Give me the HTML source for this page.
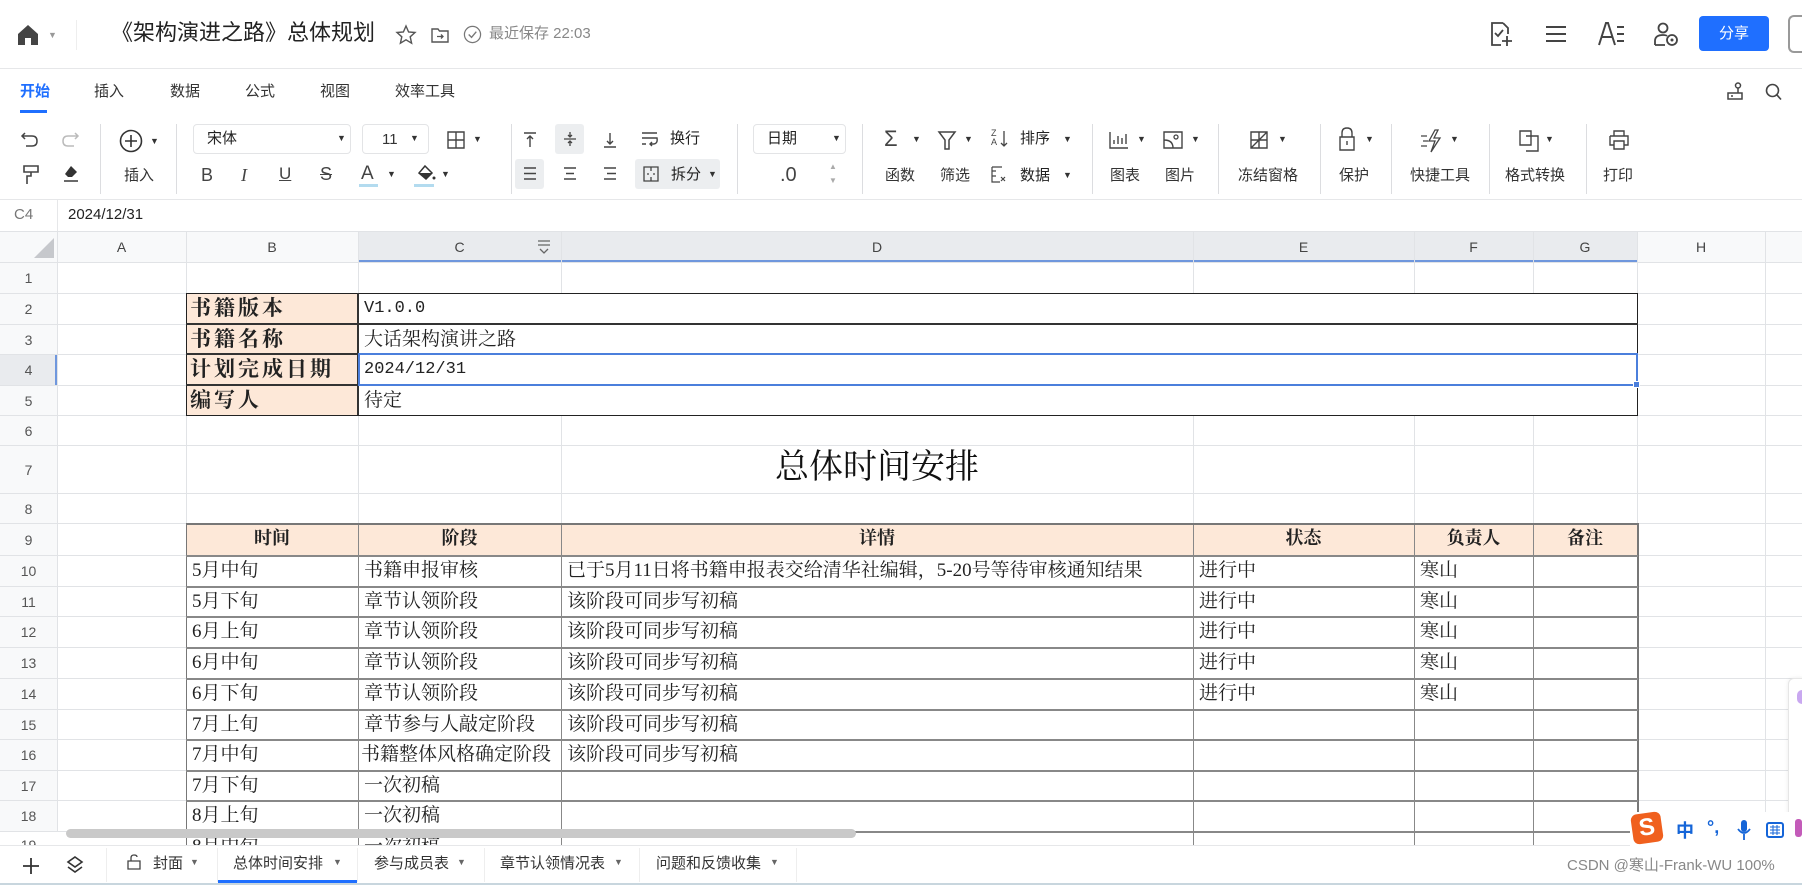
<!DOCTYPE html>
<html><head><meta charset="utf-8">
<style>
*{margin:0;padding:0;box-sizing:border-box}
body{width:1802px;height:885px;overflow:hidden;background:#fff;font-family:"Liberation Sans","Noto Sans CJK SC",sans-serif;color:#333;position:relative}
.a{position:absolute}
.t{position:absolute;white-space:nowrap;line-height:1}
.ui{font-size:15px;color:#333}
.sep{position:absolute;width:1px;background:#dcdde0;top:124px;height:70px}
.dd{position:absolute;border:1px solid #e3e4e6;border-radius:4px;background:#fff}
.tri{display:inline-block;font-size:9px;color:#333}
.vl{position:absolute;width:1px;background:#e1e3e6;top:232px;height:600px}
.hl{position:absolute;height:1px;background:#e1e3e6;left:0;width:1802px}
.rn{position:absolute;left:0;width:57px;text-align:center;font-size:14px;color:#555;line-height:1}
.ch{position:absolute;top:232px;height:30px;line-height:30px;text-align:center;font-size:14px;color:#444}
.cell{position:absolute;font-family:"Liberation Serif","Noto Serif CJK SC",serif;font-size:19px;color:#222;white-space:nowrap;line-height:31px;padding-left:6px;overflow:hidden}
.lab{background:#fde8d8;font-weight:bold;font-size:21px;letter-spacing:3px;padding-left:4px}
.hd{background:#fde8d8;font-weight:bold;text-align:center;padding-left:0;font-size:18px}
svg{position:absolute;overflow:visible}
</style></head><body>

<!-- top bar -->
<svg style="left:17px;top:24px" width="22" height="22" viewBox="0 0 22 22"><path d="M11 1 L21 10 V21 H14 V14 H8 V21 H1 V10 Z" fill="#444"/></svg>
<div class="t" style="left:48px;top:31px;font-size:9px;color:#999">▼</div>
<div class="a" style="left:76px;top:20px;width:1px;height:30px;background:#eee"></div>
<div class="t" style="left:111px;top:22px;font-size:22px;color:#222">《架构演进之路》总体规划</div>
<svg style="left:395px;top:24px" width="22" height="22" viewBox="0 0 22 22"><path d="M11 2 L13.6 8 L20 8.5 L15.2 12.8 L16.6 19.2 L11 15.8 L5.4 19.2 L6.8 12.8 L2 8.5 L8.4 8 Z" fill="none" stroke="#555" stroke-width="1.4"/></svg>
<svg style="left:430px;top:25px" width="20" height="20" viewBox="0 0 20 20"><path d="M2 4 H8 L9.5 6 H18 V17 H2 Z" fill="none" stroke="#555" stroke-width="1.4"/><path d="M7 11.5 H13 M11 9.5 L13 11.5 L11 13.5" fill="none" stroke="#555" stroke-width="1.3"/></svg>
<svg style="left:463px;top:25px" width="19" height="19" viewBox="0 0 20 20"><circle cx="10" cy="10" r="8.5" fill="none" stroke="#777" stroke-width="1.3"/><path d="M6 10 L9 13 L14 7" fill="none" stroke="#777" stroke-width="1.4"/></svg>
<div class="t" style="left:489px;top:26px;font-size:15px;color:#888">最近保存 22:03</div>

<svg style="left:1488px;top:21px" width="26" height="26" viewBox="0 0 26 26"><path d="M15 2 H4 V24 H13 M15 2 L20 7 V13" fill="none" stroke="#444" stroke-width="1.8"/><path d="M7 12 L10 15 L15 9" fill="none" stroke="#444" stroke-width="1.8"/><path d="M19 15 V25 M14 20 H24" stroke="#444" stroke-width="1.8"/></svg>
<svg style="left:1545px;top:25px" width="22" height="18" viewBox="0 0 22 18"><path d="M1 2 H21 M1 9 H21 M1 16 H21" stroke="#444" stroke-width="2"/></svg>
<svg style="left:1598px;top:22px" width="28" height="24" viewBox="0 0 28 24"><path d="M1 23 L8 1 H10 L17 23 M4 15 H14" fill="none" stroke="#444" stroke-width="2"/><path d="M19 5 H26 M19 12 H26 M19 19 H26" stroke="#444" stroke-width="2"/></svg>
<svg style="left:1653px;top:21px" width="26" height="26" viewBox="0 0 26 26"><circle cx="10" cy="7" r="4.5" fill="none" stroke="#444" stroke-width="1.8"/><path d="M2 24 V20 Q2 14 10 14 Q13 14 14 15 M2 24 H12" fill="none" stroke="#444" stroke-width="1.8"/><circle cx="19" cy="19" r="5" fill="none" stroke="#444" stroke-width="1.8"/><circle cx="19" cy="19" r="1.5" fill="#444"/></svg>
<div class="a" style="left:1699px;top:16px;width:70px;height:35px;background:#1f6fff;border-radius:4px;color:#fff;font-size:15px;text-align:center;line-height:35px">分享</div>
<div class="a" style="left:1788px;top:15px;width:14px;height:38px;border:2px solid #999;border-right:none;border-radius:6px 0 0 6px"></div>
<div class="a" style="left:0;top:68px;width:1802px;height:1px;background:#e6e7e9"></div>

<!-- tabs -->
<div class="t" style="left:20px;top:84px;font-size:15px;color:#1f6fff;font-weight:bold">开始</div>
<div class="t ui" style="left:94px;top:84px">插入</div>
<div class="t ui" style="left:170px;top:84px">数据</div>
<div class="t ui" style="left:245px;top:84px">公式</div>
<div class="t ui" style="left:320px;top:84px">视图</div>
<div class="t ui" style="left:395px;top:84px">效率工具</div>
<div class="a" style="left:20px;top:110px;width:27px;height:3px;background:#1f6fff"></div>
<svg style="left:1726px;top:82px" width="18" height="19" viewBox="0 0 18 19"><circle cx="12" cy="3.5" r="2.5" fill="none" stroke="#444" stroke-width="1.5"/><path d="M12 6 V11 M2 11 H16 V17 H2 Z M5 14 H7" fill="none" stroke="#444" stroke-width="1.5"/></svg>
<svg style="left:1765px;top:83px" width="17" height="18" viewBox="0 0 17 18"><circle cx="7.5" cy="7.5" r="6" fill="none" stroke="#444" stroke-width="1.6"/><path d="M12 12 L16 16.5" stroke="#444" stroke-width="1.6"/></svg>

<!-- toolbar -->
<svg style="left:21px;top:131px" width="18" height="16" viewBox="0 0 18 16"><path d="M4 2 L1 5 L4 8 M1 5 H11 Q16 5 16 10 Q16 15 11 15 H5" fill="none" stroke="#444" stroke-width="1.5"/></svg>
<svg style="left:61px;top:131px" width="18" height="16" viewBox="0 0 18 16"><path d="M14 2 L17 5 L14 8 M17 5 H7 Q2 5 2 10 Q2 15 7 15 H13" fill="none" stroke="#bbb" stroke-width="1.5"/></svg>
<svg style="left:23px;top:165px" width="16" height="20" viewBox="0 0 16 20"><path d="M1 1 H15 V7 H1 Z M8 7 V11 H4 V19" fill="none" stroke="#444" stroke-width="1.6"/></svg>
<svg style="left:62px;top:164px" width="18" height="20" viewBox="0 0 18 20"><path d="M9 2 L15 8 L10 13 H6 L3 10 Z" fill="#333"/><path d="M2 17 H16" stroke="#444" stroke-width="1.6"/></svg>
<div class="sep" style="left:100px"></div>
<svg style="left:119px;top:129px" width="24" height="24" viewBox="0 0 24 24"><circle cx="12" cy="12" r="10.5" fill="none" stroke="#333" stroke-width="1.6"/><path d="M12 6 V18 M6 12 H18" stroke="#333" stroke-width="1.6"/></svg>
<div class="t tri" style="left:150px;top:137px">▼</div>
<div class="t ui" style="left:124px;top:168px">插入</div>
<div class="sep" style="left:176px"></div>
<div class="dd" style="left:193px;top:124px;width:158px;height:30px"></div>
<div class="t" style="left:207px;top:131px;font-size:15px;color:#222">宋体</div>
<div class="t tri" style="left:337px;top:134px">▼</div>
<div class="dd" style="left:362px;top:124px;width:67px;height:30px"></div>
<div class="t" style="left:382px;top:132px;font-size:15px">11</div>
<div class="t tri" style="left:410px;top:134px">▼</div>
<svg style="left:447px;top:131px" width="18" height="18" viewBox="0 0 18 18"><path d="M1 1 H17 V17 H1 Z M9 1 V17 M1 9 H17" fill="none" stroke="#444" stroke-width="1.4"/></svg>
<div class="t tri" style="left:473px;top:135px">▼</div>
<div class="t" style="left:201px;top:166px;font-size:18px;color:#444">B</div>
<div class="t" style="left:241px;top:166px;font-size:18px;color:#444;font-style:italic;font-family:'Liberation Serif',serif">I</div>
<div class="t" style="left:279px;top:165px;font-size:17px;color:#444;text-decoration:underline">U</div>
<div class="t" style="left:320px;top:165px;font-size:18px;color:#444;text-decoration:line-through">S</div>
<div class="t" style="left:361px;top:164px;font-size:19px;color:#444">A</div>
<div class="a" style="left:359px;top:184px;width:19px;height:3px;background:#b3dbef"></div>
<div class="t tri" style="left:387px;top:170px">▼</div>
<svg style="left:415px;top:164px" width="22" height="18" viewBox="0 0 22 18"><path d="M10 2 L17 9 L11 15 L4 9 Z" fill="none" stroke="#333" stroke-width="1.5"/><path d="M4 9 H17 L11 15 Z" fill="#333"/><circle cx="19" cy="14" r="1.5" fill="#333"/></svg>
<div class="a" style="left:414px;top:184px;width:20px;height:3px;background:#b3dbef"></div>
<div class="t tri" style="left:441px;top:170px">▼</div>
<div class="sep" style="left:511px"></div>
<svg style="left:523px;top:132px" width="14" height="16" viewBox="0 0 14 16"><path d="M1 1 H13 M7 15 V4 M4 7 L7 4 L10 7" fill="none" stroke="#444" stroke-width="1.4"/></svg>
<div class="a" style="left:555px;top:124px;width:29px;height:30px;background:#eceef0;border-radius:3px"></div>
<svg style="left:563px;top:131px" width="14" height="16" viewBox="0 0 14 16"><path d="M1 8 H13 M7 1 V6 M5 4 L7 6 L9 4 M7 15 V10 M5 12 L7 10 L9 12" fill="none" stroke="#444" stroke-width="1.3"/></svg>
<svg style="left:603px;top:132px" width="14" height="16" viewBox="0 0 14 16"><path d="M1 15 H13 M7 1 V12 M4 9 L7 12 L10 9" fill="none" stroke="#444" stroke-width="1.4"/></svg>
<svg style="left:641px;top:132px" width="18" height="14" viewBox="0 0 18 14"><path d="M1 1 H16 M1 6 H16 Q17 12 12 12 H9 M11 10 L9 12 L11 14 M1 12 H5" fill="none" stroke="#444" stroke-width="1.4"/></svg>
<div class="t ui" style="left:670px;top:131px;color:#222">换行</div>
<div class="a" style="left:515px;top:159px;width:29px;height:30px;background:#eceef0;border-radius:3px"></div>
<svg style="left:523px;top:167px" width="14" height="13" viewBox="0 0 14 13"><path d="M1 1 H13 M1 6.5 H13 M1 12 H13" stroke="#444" stroke-width="1.4"/></svg>
<svg style="left:563px;top:167px" width="14" height="13" viewBox="0 0 14 13"><path d="M1 1 H13 M3 6.5 H11 M1 12 H13" stroke="#444" stroke-width="1.4"/></svg>
<svg style="left:603px;top:167px" width="14" height="13" viewBox="0 0 14 13"><path d="M1 1 H13 M4 6.5 H13 M1 12 H13" stroke="#444" stroke-width="1.4"/></svg>
<div class="a" style="left:635px;top:159px;width:85px;height:30px;background:#eceef0;border-radius:3px"></div>
<svg style="left:643px;top:166px" width="16" height="16" viewBox="0 0 16 16"><path d="M1 1 H15 V15 H1 Z M8 1 V5 M8 11 V15 M4 8 H6 M10 8 H12" fill="none" stroke="#444" stroke-width="1.3"/></svg>
<div class="t ui" style="left:671px;top:167px;color:#222">拆分</div>
<div class="t tri" style="left:708px;top:170px">▼</div>
<div class="sep" style="left:737px"></div>
<div class="dd" style="left:753px;top:124px;width:93px;height:30px"></div>
<div class="t ui" style="left:767px;top:131px;color:#222">日期</div>
<div class="t tri" style="left:832px;top:134px">▼</div>
<div class="t" style="left:780px;top:165px;font-size:20px;color:#444">.0</div>
<div class="t" style="left:829px;top:163px;font-size:8px;color:#aaa">▲</div>
<div class="t" style="left:829px;top:177px;font-size:8px;color:#aaa">▼</div>
<div class="sep" style="left:862px"></div>
<div class="t" style="left:884px;top:128px;font-size:22px;color:#444">Σ</div>
<div class="t tri" style="left:912px;top:135px">▼</div>
<div class="t ui" style="left:885px;top:168px">函数</div>
<svg style="left:938px;top:131px" width="18" height="19" viewBox="0 0 18 19"><path d="M1 1 H17 L11 9 V18 H7 V9 Z" fill="none" stroke="#444" stroke-width="1.5"/></svg>
<div class="t tri" style="left:964px;top:135px">▼</div>
<div class="t ui" style="left:940px;top:168px">筛选</div>
<div class="t" style="left:991px;top:129px;font-size:9px;color:#444;line-height:9px">Z<br>A</div>
<svg style="left:1000px;top:130px" width="8" height="18" viewBox="0 0 8 18"><path d="M4 1 V16 M1 13 L4 16 L7 13" fill="none" stroke="#444" stroke-width="1.3"/></svg>
<div class="t ui" style="left:1020px;top:131px;color:#222">排序</div>
<div class="t tri" style="left:1063px;top:135px">▼</div>
<svg style="left:991px;top:166px" width="16" height="17" viewBox="0 0 16 17"><path d="M1 1 H11 M1 5 H5 M1 1 V16 H9 M1 10 H5 M10 11 L14 15 M14 11 L10 15" fill="none" stroke="#444" stroke-width="1.2"/></svg>
<div class="t ui" style="left:1020px;top:168px;color:#222">数据</div>
<div class="t tri" style="left:1063px;top:171px">▼</div>
<div class="sep" style="left:1092px"></div>
<svg style="left:1109px;top:131px" width="20" height="18" viewBox="0 0 20 18"><path d="M1 1 V17 H19 M5 13 V9 M9 13 V5 M13 13 V7 M17 13 V3" fill="none" stroke="#444" stroke-width="1.4"/></svg>
<div class="t tri" style="left:1137px;top:135px">▼</div>
<div class="t ui" style="left:1110px;top:168px">图表</div>
<svg style="left:1163px;top:131px" width="20" height="18" viewBox="0 0 20 18"><path d="M1 1 H19 V17 H1 Z M1 9 Q10 9 10 17" fill="none" stroke="#444" stroke-width="1.4"/><circle cx="13" cy="6" r="2" fill="none" stroke="#444" stroke-width="1.3"/></svg>
<div class="t tri" style="left:1191px;top:135px">▼</div>
<div class="t ui" style="left:1165px;top:168px">图片</div>
<div class="sep" style="left:1218px"></div>
<svg style="left:1250px;top:131px" width="18" height="18" viewBox="0 0 18 18"><path d="M1 1 H17 V17 H1 Z M9 1 V17 M1 9 H17 M1 17 L17 1" fill="none" stroke="#444" stroke-width="1.4"/></svg>
<div class="t tri" style="left:1278px;top:135px">▼</div>
<div class="t ui" style="left:1238px;top:168px">冻结窗格</div>
<div class="sep" style="left:1320px"></div>
<svg style="left:1339px;top:127px" width="16" height="24" viewBox="0 0 16 24"><path d="M3 10 V6 Q3 1 8 1 Q13 1 13 6 V10 M1 10 H15 V23 H1 Z M8 14 V18" fill="none" stroke="#444" stroke-width="1.4"/></svg>
<div class="t tri" style="left:1365px;top:135px">▼</div>
<div class="t ui" style="left:1339px;top:168px">保护</div>
<div class="sep" style="left:1391px"></div>
<svg style="left:1420px;top:129px" width="24" height="24" viewBox="0 0 24 24"><path d="M15 1 L9 12 H15 L11 23 L20 9 H14 L18 1 Z" fill="none" stroke="#444" stroke-width="1.3"/><path d="M1 7 H7 M3 12 H8 M1 17 H7" stroke="#444" stroke-width="1.3"/></svg>
<div class="t tri" style="left:1450px;top:135px">▼</div>
<div class="t ui" style="left:1410px;top:168px">快捷工具</div>
<div class="sep" style="left:1489px"></div>
<svg style="left:1519px;top:130px" width="20" height="22" viewBox="0 0 20 22"><path d="M1 1 H12 V15 H1 Z M7 6 H19 V21 H7" fill="none" stroke="#444" stroke-width="1.4"/></svg>
<div class="t tri" style="left:1545px;top:135px">▼</div>
<div class="t ui" style="left:1505px;top:168px">格式转换</div>
<div class="sep" style="left:1586px"></div>
<svg style="left:1609px;top:130px" width="20" height="20" viewBox="0 0 20 20"><path d="M5 6 V1 H15 V6 M1 6 H19 V15 H15 M5 15 H1 V6 M5 11 H15 V19 H5 Z" fill="none" stroke="#444" stroke-width="1.4"/></svg>
<div class="t ui" style="left:1603px;top:168px">打印</div>
<div class="a" style="left:0;top:199px;width:1802px;height:1px;background:#e6e7e9"></div>

<!-- formula bar -->
<div class="t" style="left:14px;top:207px;font-size:15px;color:#777">C4</div>
<div class="a" style="left:57px;top:200px;width:1px;height:31px;background:#e6e7e9"></div>
<div class="t" style="left:68px;top:207px;font-size:15px;color:#222">2024/12/31</div>
<div class="a" style="left:0;top:231px;width:1802px;height:1px;background:#e1e3e6"></div>

<!-- column header -->
<div class="a" style="left:0;top:232px;width:1802px;height:30px;background:#f8f9fa"></div>
<div class="a" style="left:358px;top:232px;width:1279px;height:30px;background:#e9ebee"></div>
<div class="a" style="left:358px;top:260px;width:1279px;height:2px;background:#6f97dd"></div>
<svg style="left:34px;top:238px" width="20" height="20" viewBox="0 0 20 20"><path d="M20 0 V20 H0 Z" fill="#c6c8cc"/></svg>
<div class="ch" style="left:57px;width:129px">A</div>
<div class="ch" style="left:186px;width:172px">B</div>
<div class="ch" style="left:358px;width:203px">C</div>
<svg style="left:537px;top:240px" width="14" height="15" viewBox="0 0 14 15"><path d="M1 1 H13 M1 5 H13 M3 9 L7 13 L11 9" fill="none" stroke="#666" stroke-width="1.3"/></svg>
<div class="ch" style="left:561px;width:632px">D</div>
<div class="ch" style="left:1193px;width:221px">E</div>
<div class="ch" style="left:1414px;width:119px">F</div>
<div class="ch" style="left:1533px;width:104px">G</div>
<div class="ch" style="left:1637px;width:128px">H</div>

<!-- row header bg -->
<div class="a" style="left:0;top:262px;width:57px;height:570px;background:#f8f9fa"></div>
<div class="a" style="left:0;top:354px;width:57px;height:31px;background:#e9ebee"></div>
<div class="a" style="left:55px;top:354px;width:2px;height:31px;background:#6f97dd"></div>

<!-- grid lines -->
<div class="vl" style="left:57px"></div>
<div class="vl" style="left:186px"></div>
<div class="vl" style="left:358px"></div>
<div class="vl" style="left:561px"></div>
<div class="vl" style="left:1193px"></div>
<div class="vl" style="left:1414px"></div>
<div class="vl" style="left:1533px"></div>
<div class="vl" style="left:1637px"></div>
<div class="vl" style="left:1765px"></div>
<div class="hl" style="top:262px"></div>
<div class="hl" style="top:293px"></div>
<div class="hl" style="top:324px"></div>
<div class="hl" style="top:354px"></div>
<div class="hl" style="top:385px"></div>
<div class="hl" style="top:415px"></div>
<div class="hl" style="top:445px"></div>
<div class="hl" style="top:493px"></div>
<div class="hl" style="top:523px"></div>
<div class="hl" style="top:555px"></div>
<div class="hl" style="top:586px"></div>
<div class="hl" style="top:616px"></div>
<div class="hl" style="top:647px"></div>
<div class="hl" style="top:678px"></div>
<div class="hl" style="top:709px"></div>
<div class="hl" style="top:739px"></div>
<div class="hl" style="top:770px"></div>
<div class="hl" style="top:800px"></div>
<div class="hl" style="top:831px"></div>

<!-- row numbers -->
<div class="rn" style="top:271px">1</div>
<div class="rn" style="top:302px">2</div>
<div class="rn" style="top:333px">3</div>
<div class="rn" style="top:363px">4</div>
<div class="rn" style="top:394px">5</div>
<div class="rn" style="top:424px">6</div>
<div class="rn" style="top:463px">7</div>
<div class="rn" style="top:502px">8</div>
<div class="rn" style="top:533px">9</div>
<div class="rn" style="top:564px">10</div>
<div class="rn" style="top:595px">11</div>
<div class="rn" style="top:625px">12</div>
<div class="rn" style="top:656px">13</div>
<div class="rn" style="top:687px">14</div>
<div class="rn" style="top:718px">15</div>
<div class="rn" style="top:748px">16</div>
<div class="rn" style="top:779px">17</div>
<div class="rn" style="top:809px">18</div>
<div class="rn" style="top:838px">19</div>

<!-- info table -->
<div class="cell lab" style="left:186px;top:293px;width:172px;height:31px">书籍版本</div>
<div class="cell lab" style="left:186px;top:324px;width:172px;height:30px">书籍名称</div>
<div class="cell lab" style="left:186px;top:354px;width:172px;height:31px">计划完成日期</div>
<div class="cell lab" style="left:186px;top:385px;width:172px;height:30px">编写人</div>
<div class="a" style="left:358px;top:293px;width:1279px;height:122px;background:#fff"></div>
<div class="cell" style="left:358px;top:293px;font-family:'Liberation Mono','Noto Serif CJK SC',monospace;font-size:17px">V1.0.0</div>
<div class="cell" style="left:358px;top:324px">大话架构演讲之路</div>
<div class="cell" style="left:358px;top:354px;font-family:'Liberation Mono','Noto Serif CJK SC',monospace;font-size:17px">2024/12/31</div>
<div class="cell" style="left:358px;top:385px">待定</div>
<div class="a" style="left:186px;top:293px;width:1452px;height:123px;border:1.5px solid #222"></div>
<div class="a" style="left:186px;top:323px;width:1452px;height:1.5px;background:#333"></div>
<div class="a" style="left:186px;top:353px;width:1452px;height:1.5px;background:#333"></div>
<div class="a" style="left:186px;top:384px;width:1452px;height:1.5px;background:#333"></div>
<div class="a" style="left:357px;top:293px;width:1.5px;height:122px;background:#333"></div>
<!-- selection -->
<div class="a" style="left:358px;top:353px;width:1280px;height:33px;border:2px solid #4b7fdc"></div>
<div class="a" style="left:1633px;top:381px;width:7px;height:7px;background:#4b7fdc;border:1px solid #fff"></div>

<!-- title -->
<div class="t" style="left:561px;width:632px;text-align:center;top:451px;font-family:'Liberation Serif','Noto Serif CJK SC',serif;font-size:34px;color:#111">总体时间安排</div>

<!-- schedule table -->
<div class="a" style="left:186px;top:523px;width:1451px;height:310px;background:#fff"></div>
<div class="cell hd" style="left:186px;top:523px;width:172px;height:32px">时间</div>
<div class="cell hd" style="left:358px;top:523px;width:203px;height:32px">阶段</div>
<div class="cell hd" style="left:561px;top:523px;width:632px;height:32px">详情</div>
<div class="cell hd" style="left:1193px;top:523px;width:221px;height:32px">状态</div>
<div class="cell hd" style="left:1414px;top:523px;width:119px;height:32px">负责人</div>
<div class="cell hd" style="left:1533px;top:523px;width:104px;height:32px">备注</div>

<div class="cell" style="left:186px;top:555px">5月中旬</div><div class="cell" style="left:358px;top:555px">书籍申报审核</div><div class="cell" style="left:561px;top:555px">已于5月11日将书籍申报表交给清华社编辑，5-20号等待审核通知结果</div><div class="cell" style="left:1193px;top:555px">进行中</div><div class="cell" style="left:1414px;top:555px">寒山</div>
<div class="cell" style="left:186px;top:586px">5月下旬</div><div class="cell" style="left:358px;top:586px">章节认领阶段</div><div class="cell" style="left:561px;top:586px">该阶段可同步写初稿</div><div class="cell" style="left:1193px;top:586px">进行中</div><div class="cell" style="left:1414px;top:586px">寒山</div>
<div class="cell" style="left:186px;top:616px">6月上旬</div><div class="cell" style="left:358px;top:616px">章节认领阶段</div><div class="cell" style="left:561px;top:616px">该阶段可同步写初稿</div><div class="cell" style="left:1193px;top:616px">进行中</div><div class="cell" style="left:1414px;top:616px">寒山</div>
<div class="cell" style="left:186px;top:647px">6月中旬</div><div class="cell" style="left:358px;top:647px">章节认领阶段</div><div class="cell" style="left:561px;top:647px">该阶段可同步写初稿</div><div class="cell" style="left:1193px;top:647px">进行中</div><div class="cell" style="left:1414px;top:647px">寒山</div>
<div class="cell" style="left:186px;top:678px">6月下旬</div><div class="cell" style="left:358px;top:678px">章节认领阶段</div><div class="cell" style="left:561px;top:678px">该阶段可同步写初稿</div><div class="cell" style="left:1193px;top:678px">进行中</div><div class="cell" style="left:1414px;top:678px">寒山</div>
<div class="cell" style="left:186px;top:709px">7月上旬</div><div class="cell" style="left:358px;top:709px">章节参与人敲定阶段</div><div class="cell" style="left:561px;top:709px">该阶段可同步写初稿</div>
<div class="cell" style="left:186px;top:739px">7月中旬</div><div class="cell" style="left:358px;top:739px;padding-left:3px">书籍整体风格确定阶段</div><div class="cell" style="left:561px;top:739px">该阶段可同步写初稿</div>
<div class="cell" style="left:186px;top:770px">7月下旬</div><div class="cell" style="left:358px;top:770px">一次初稿</div>
<div class="cell" style="left:186px;top:800px">8月上旬</div><div class="cell" style="left:358px;top:800px">一次初稿</div>
<div class="cell" style="left:186px;top:831px;height:14px">8月中旬</div><div class="cell" style="left:358px;top:831px;height:14px">一次初稿</div>

<!-- schedule borders -->
<div class="a" style="left:186px;top:523px;width:1px;height:322px;background:#777"></div>
<div class="a" style="left:358px;top:523px;width:1px;height:322px;background:#888"></div>
<div class="a" style="left:561px;top:523px;width:1px;height:322px;background:#888"></div>
<div class="a" style="left:1193px;top:523px;width:1px;height:322px;background:#888"></div>
<div class="a" style="left:1414px;top:523px;width:1px;height:322px;background:#888"></div>
<div class="a" style="left:1533px;top:523px;width:1px;height:322px;background:#888"></div>
<div class="a" style="left:1637px;top:523px;width:1.5px;height:322px;background:#777"></div>
<div class="a" style="left:186px;top:523px;width:1452px;height:1.5px;background:#777"></div>
<div class="a" style="left:186px;top:555px;width:1452px;height:1.5px;background:#888"></div>
<div class="a" style="left:186px;top:586px;width:1452px;height:1.5px;background:#888"></div>
<div class="a" style="left:186px;top:616px;width:1452px;height:1.5px;background:#888"></div>
<div class="a" style="left:186px;top:647px;width:1452px;height:1.5px;background:#888"></div>
<div class="a" style="left:186px;top:678px;width:1452px;height:1.5px;background:#888"></div>
<div class="a" style="left:186px;top:709px;width:1452px;height:1.5px;background:#888"></div>
<div class="a" style="left:186px;top:739px;width:1452px;height:1.5px;background:#888"></div>
<div class="a" style="left:186px;top:770px;width:1452px;height:1.5px;background:#888"></div>
<div class="a" style="left:186px;top:800px;width:1452px;height:1.5px;background:#888"></div>
<div class="a" style="left:186px;top:831px;width:1452px;height:1.5px;background:#888"></div>

<!-- right floating panel -->
<div class="a" style="left:1788px;top:678px;width:20px;height:152px;background:#fff;border:1px solid #e6e6e6;border-radius:6px;box-shadow:0 0 4px rgba(0,0,0,.08)"></div>
<div class="a" style="left:1797px;top:690px;width:10px;height:14px;background:#c9a8f0;border-radius:5px"></div>

<!-- horizontal scrollbar -->
<div class="a" style="left:66px;top:829px;width:790px;height:9px;background:#c9c9c9;border-radius:5px"></div>

<!-- sheet tabs -->
<div class="a" style="left:0;top:845px;width:1802px;height:40px;background:#fff;border-top:1px solid #e6e7e9"></div>
<svg style="left:22px;top:857px" width="18" height="18" viewBox="0 0 18 18"><path d="M9 1 V17 M1 9 H17" stroke="#333" stroke-width="1.8"/></svg>
<svg style="left:66px;top:856px" width="18" height="20" viewBox="0 0 18 20"><path d="M9 1 L16 6 L9 11 L2 6 Z M2 11 L9 16 L16 11" fill="none" stroke="#333" stroke-width="1.6"/></svg>
<div class="a" style="left:106px;top:848px;width:1px;height:34px;background:#eee"></div>
<svg style="left:127px;top:854px" width="14" height="16" viewBox="0 0 14 16"><path d="M1 7 H13 V15 H1 Z M4 7 V4 Q4 1 7 1 Q10 1 10 3" fill="none" stroke="#444" stroke-width="1.3"/></svg>
<div class="t" style="left:153px;top:856px;font-size:15px;color:#333">封面</div>
<div class="t" style="left:190px;top:858px;font-size:9px;color:#666">▼</div>
<div class="a" style="left:217px;top:848px;width:1px;height:34px;background:#eee"></div>
<div class="t" style="left:233px;top:856px;font-size:15px;color:#333">总体时间安排</div>
<div class="t" style="left:333px;top:858px;font-size:9px;color:#666">▼</div>
<div class="a" style="left:218px;top:880px;width:139px;height:3px;background:#1f6fff"></div>
<div class="a" style="left:357px;top:848px;width:1px;height:34px;background:#eee"></div>
<div class="t" style="left:374px;top:856px;font-size:15px;color:#333">参与成员表</div>
<div class="t" style="left:457px;top:858px;font-size:9px;color:#666">▼</div>
<div class="a" style="left:484px;top:848px;width:1px;height:34px;background:#eee"></div>
<div class="t" style="left:500px;top:856px;font-size:15px;color:#333">章节认领情况表</div>
<div class="t" style="left:614px;top:858px;font-size:9px;color:#666">▼</div>
<div class="a" style="left:639px;top:848px;width:1px;height:34px;background:#eee"></div>
<div class="t" style="left:656px;top:856px;font-size:15px;color:#333">问题和反馈收集</div>
<div class="t" style="left:770px;top:858px;font-size:9px;color:#666">▼</div>
<div class="a" style="left:796px;top:848px;width:1px;height:34px;background:#eee"></div>
<div class="t" style="left:1567px;top:858px;font-size:15px;color:#888">CSDN @寒山-Frank-WU 100%</div>
<div class="a" style="left:0;top:883px;width:1802px;height:2px;background:#c8d6de"></div>

<!-- IME bar -->
<div class="a" style="left:1630px;top:812px;width:172px;height:34px;background:#fff"></div>
<div class="a" style="left:1632px;top:813px;width:30px;height:30px;background:#f0601e;border-radius:6px;transform:rotate(-8deg);color:#fff;font-weight:bold;font-size:24px;text-align:center;line-height:30px">S</div>
<div class="t" style="left:1676px;top:822px;font-size:18px;color:#1565d8;font-weight:bold">中</div>
<div class="t" style="left:1707px;top:818px;font-size:18px;color:#1565d8;font-weight:bold">°,</div>
<svg style="left:1737px;top:819px" width="14" height="22" viewBox="0 0 14 22"><rect x="4" y="1" width="6" height="12" rx="3" fill="#1565d8"/><path d="M1 10 Q7 18 13 10 M7 15 V21" fill="none" stroke="#1565d8" stroke-width="1.8"/></svg>
<svg style="left:1766px;top:822px" width="18" height="16" viewBox="0 0 18 16"><rect x="1" y="1" width="16" height="14" rx="2" fill="none" stroke="#1565d8" stroke-width="2"/><path d="M4 5 H14 M4 8 H14 M4 11 H14 M7 3 V13 M11 3 V13" stroke="#1565d8" stroke-width="1"/></svg>
<div class="a" style="left:1795px;top:819px;width:7px;height:18px;background:#c35bb9;border-radius:3px"></div>
</body></html>
